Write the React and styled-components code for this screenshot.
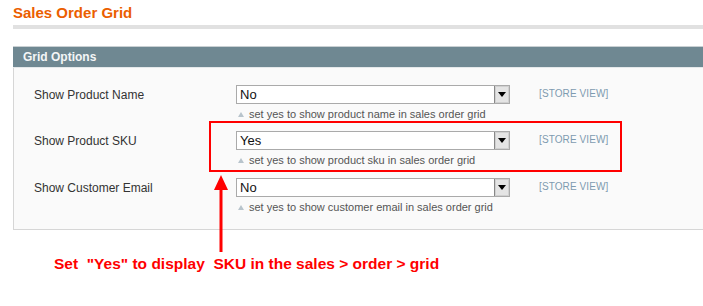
import React from "react";
import styled, { createGlobalStyle } from "styled-components";

const Global = createGlobalStyle`
  html, body { margin: 0; padding: 0; background: #fff; }
  body { font-family: "Liberation Sans", Arial, sans-serif; width: 703px; height: 306px; overflow: hidden; }
`;

const Page = styled.div`
  position: relative;
  padding: 0 0 0 13px;
`;

const Title = styled.h3`
  margin: 0;
  padding: 4px 0 0 0;
  height: 21px;
  font-size: 15px;
  font-weight: bold;
  color: #eb5e00;
  line-height: 18px;
  border-bottom: 4px solid #e1e1e1;
`;

const Fieldset = styled.div`
  margin-top: 17px;
  margin-right: -10px;
`;

const Header = styled.div`
  height: 20px;
  background: #6f8892;
  border-top: 1px solid #c9d0d3;
  border-bottom: 1px solid #e4e8ea;
  color: #f4f6f7;
  font-size: 12px;
  font-weight: bold;
  line-height: 21px;
  padding-left: 10px;
`;

const Body = styled.div`
  background: #fafafa;
  border: 1px solid #d6d6d6;
  border-top: none;
  padding: 17px 0 0 20px;
  height: 144px;
`;

const Row = styled.div`
  display: grid;
  grid-template-columns: 202px 274px 29px auto;
  height: ${(p) => p.$h}px;
`;

const Label = styled.div`
  font-size: 12px;
  color: #333;
  line-height: 20px;
`;

const Value = styled.div`
  display: flex;
  flex-direction: column;
`;

const Select = styled.div`
  height: 17px;
  border: 1px solid #aaa;
  background: #fff;
  display: flex;
  align-items: stretch;
  justify-content: space-between;
  font-size: 13px;
  color: #111;
  line-height: 18px;
  padding-left: 3px;
`;

const Arrow = styled.div`
  width: 14px;
  background: #e4e4e4;
  border-left: 1px solid #888;
  box-shadow: inset 0 0 0 1px #d0d0d0;
  display: flex;
  align-items: center;
  justify-content: center;
`;

const Note = styled.div`
  margin-top: 4px;
  font-size: 11px;
  color: #555;
  line-height: 13px;
  padding-left: 2px;
  display: flex;
  align-items: center;
  gap: 5px;
  white-space: nowrap;
`;

const Tri = styled.span`
  width: 0;
  height: 0;
  border-left: 3px solid transparent;
  border-right: 3px solid transparent;
  border-bottom: 5px solid #b8c4cc;
`;

const Scope = styled.div`
  grid-column: 4;
  font-size: 10px;
  color: #7e9bb0;
  line-height: 17px;
  letter-spacing: 0.1px;
`;

const Callout = styled.div`
  position: absolute;
  left: 209px;
  top: 121px;
  width: 409px;
  height: 47px;
  border: 2px solid #f00;
`;

const ArrowSvg = styled.svg`
  position: absolute;
  left: 212px;
  top: 175px;
`;

const Annotation = styled.div`
  margin: 24px 0 0 41px;
  font-size: 15.5px;
  font-weight: bold;
  color: #f00;
  white-space: pre;
  line-height: 19px;
`;

const rows = [
  { label: "Show Product Name", value: "No", note: "set yes to show product name in sales order grid", h: 46 },
  { label: "Show Product SKU", value: "Yes", note: "set yes to show product sku in sales order grid", h: 47 },
  { label: "Show Customer Email", value: "No", note: "set yes to show customer email in sales order grid", h: 47 },
];

export default function App() {
  return (
    <>
      <Global />
      <Page>
        <Title>Sales Order Grid</Title>
        <Fieldset>
          <Header>Grid Options</Header>
          <Body>
            {rows.map((r) => (
              <Row key={r.label} $h={r.h}>
                <Label>{r.label}</Label>
                <Value>
                  <Select>
                    <span>{r.value}</span>
                    <Arrow>
                      <svg width="8" height="5" viewBox="0 0 8 5">
                        <path d="M0 0h8L4 5z" fill="#000" />
                      </svg>
                    </Arrow>
                  </Select>
                  <Note>
                    <Tri />
                    {r.note}
                  </Note>
                </Value>
                <Scope>[STORE VIEW]</Scope>
              </Row>
            ))}
          </Body>
        </Fieldset>
        <Annotation>{'Set  "Yes" to display  SKU in the sales > order > grid'}</Annotation>
        <Callout />
        <ArrowSvg width="18" height="77" viewBox="0 0 18 77">
          <path d="M9 0L16 15H2z" fill="#f00" />
          <rect x="7.5" y="12" width="3" height="65" fill="#f00" />
        </ArrowSvg>
      </Page>
    </>
  );
}
